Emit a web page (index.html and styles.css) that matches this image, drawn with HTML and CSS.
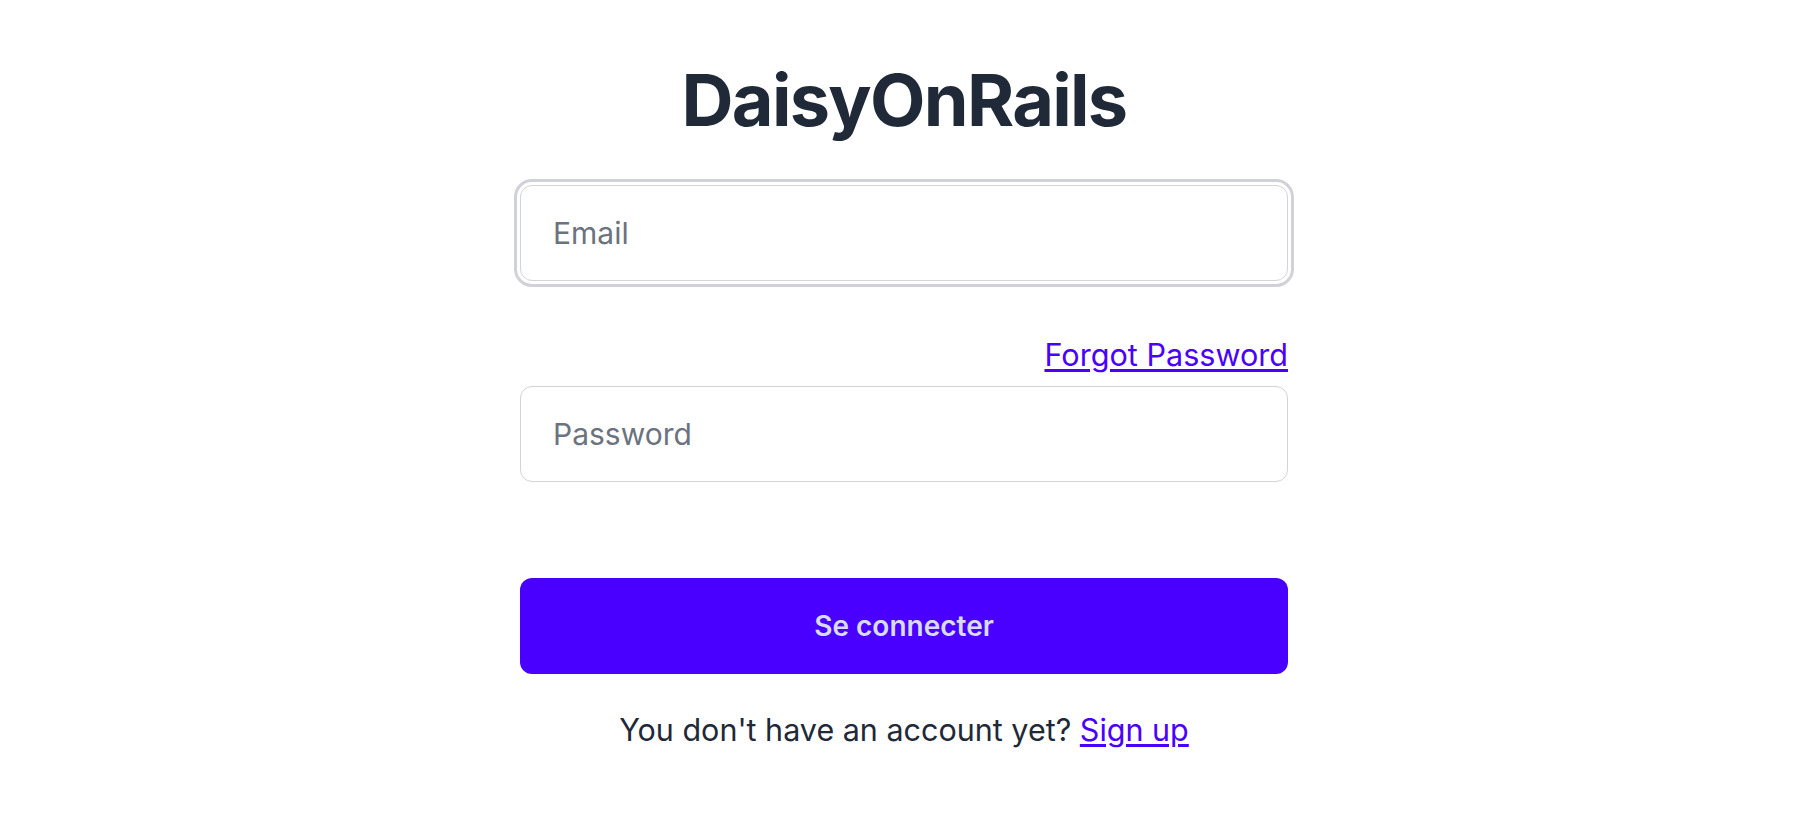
FILE: index.html
```html
<!DOCTYPE html>
<html lang="en">
<head>
<meta charset="utf-8">
<title>DaisyOnRails</title>
<link rel="stylesheet" href="styles.css">
</head>
<body>
<main class="page">
  <h1 class="title">DaisyOnRails</h1>
  <form class="form">
    <input class="input input-focus" type="email" placeholder="Email">
    <div class="label-row">
      <a class="link" href="#">Forgot Password</a>
    </div>
    <input class="input" type="password" placeholder="Password">
    <button class="btn" type="button">Se connecter</button>
    <p class="signup">You don't have an account yet? <a class="link" href="#">Sign up</a></p>
  </form>
</main>
</body>
</html>
```

FILE: styles.css
```css
* { box-sizing: border-box; }
html, body { margin: 0; padding: 0; background: #ffffff; }
body {
  font-family: Inter, "Noto Sans", "Liberation Sans", sans-serif;
  color: #1f2937;
}
.page {
  display: flex;
  flex-direction: column;
  align-items: center;
  padding-top: 64px;
  padding-left: 8px;
}
.title {
  margin: 0;
  font-size: 72px;
  line-height: 72px;
  font-weight: 700;
  letter-spacing: -1.7px;
  color: #1f2937;
}
.form {
  width: 768px;
  margin-top: 49px;
  display: flex;
  flex-direction: column;
}
.input {
  display: block;
  width: 100%;
  height: 96px;
  padding: 0 32px;
  border: 1.5px solid #d2d4d8;
  border-radius: 12px;
  background: #ffffff;
  font-family: inherit;
  font-size: 30px;
  color: #1f2937;
  outline: none;
}
.input::placeholder { color: #6b7280; opacity: 1; }
.input-focus {
  outline: 3px solid #d0d2d6;
  outline-offset: 3px;
}
.label-row {
  display: flex;
  justify-content: flex-end;
  margin-top: 39px;
  padding: 14px 0 10px;
  font-size: 30.6px;
  line-height: 42px;
}
.link { color: #4a00ff; text-decoration: underline; text-underline-offset: 3px; }
.btn {
  margin-top: 96px;
  height: 96px;
  width: 100%;
  border: none;
  border-radius: 12px;
  background: #4a00ff;
  color: #d6dbff;
  font-family: inherit;
  font-size: 28px;
  font-weight: 600;
}
.signup {
  margin: 35px 0 0;
  text-align: center;
  font-size: 30.5px;
  line-height: 42px;
  color: #1f2937;
}
```
